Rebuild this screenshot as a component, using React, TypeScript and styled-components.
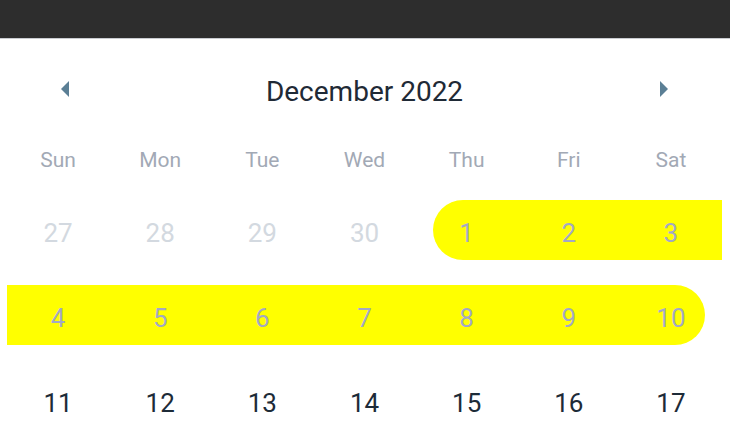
import React from "react";
import styled, { createGlobalStyle } from "styled-components";

const Global = createGlobalStyle`
  html, body { margin: 0; padding: 0; background: #ffffff; }
  body { font-family: Roboto, "Noto Sans", sans-serif; overflow: hidden; }
`;

const TopBar = styled.div`
  height: 38px;
  background: #2d2d2d;
  border-bottom: 1px solid #c9cbd0;
`;

const Calendar = styled.div`
  padding: 0 8px 0 7px;
`;

const Nav = styled.div`
  height: 104px;
  display: flex;
  align-items: center;
  justify-content: space-between;
  padding: 0 53px;
`;

const Arrow = styled.button`
  width: 10px;
  height: 16px;
  padding: 0;
  border: 0;
  background: none;
  display: flex;
  align-items: center;
  justify-content: center;
  color: #5b7f95;
  margin-top: -4px;
`;

const Title = styled.div`
  font-size: 28px;
  color: #1f2a36;
`;

const Weekdays = styled.div`
  height: 34px;
  display: grid;
  grid-template-columns: repeat(7, 1fr);
  align-items: center;
`;

const Weekday = styled.div`
  text-align: center;
  font-size: 21px;
  color: #a2a9b5;
`;

const Days = styled.div`
  margin-top: 23px;
  display: grid;
  grid-template-columns: repeat(7, 1fr);
  grid-auto-rows: 60px;
  row-gap: 25px;
`;

type Kind = "muted" | "range" | "normal";
type Edge = "none" | "start" | "end";

const Cell = styled.div`
  display: flex;
  align-items: stretch;
`;

const Fill = styled.div<{ $range: boolean; $edge: Edge }>`
  flex: 1;
  display: flex;
  align-items: center;
  justify-content: center;
  background: ${(p) => (p.$range ? "#ffff00" : "transparent")};
  margin-left: ${(p) => (p.$edge === "start" ? "calc(50% - 34px)" : "0")};
  margin-right: ${(p) => (p.$edge === "end" ? "calc(50% - 34px)" : "0")};
  border-radius: ${(p) =>
    p.$edge === "start" ? "30px 0 0 30px" : p.$edge === "end" ? "0 30px 30px 0" : "0"};
`;

const Num = styled.span<{ $kind: Kind; $edge: Edge }>`
  font-size: 26px;
  margin-top: 6px;
  padding-right: ${(p) => (p.$edge === "start" ? "17px" : "0")};
  padding-left: ${(p) => (p.$edge === "end" ? "17px" : "0")};
  color: ${(p) =>
    p.$kind === "muted" ? "#d3d9e0" : p.$kind === "range" ? "#a3a9c4" : "#1d2b38"};
`;

const weekdays = ["Sun", "Mon", "Tue", "Wed", "Thu", "Fri", "Sat"];

type Day = { n: number; kind: Kind; edge: Edge };

const days: Day[] = [
  { n: 27, kind: "muted", edge: "none" },
  { n: 28, kind: "muted", edge: "none" },
  { n: 29, kind: "muted", edge: "none" },
  { n: 30, kind: "muted", edge: "none" },
  { n: 1, kind: "range", edge: "start" },
  { n: 2, kind: "range", edge: "none" },
  { n: 3, kind: "range", edge: "none" },
  { n: 4, kind: "range", edge: "none" },
  { n: 5, kind: "range", edge: "none" },
  { n: 6, kind: "range", edge: "none" },
  { n: 7, kind: "range", edge: "none" },
  { n: 8, kind: "range", edge: "none" },
  { n: 9, kind: "range", edge: "none" },
  { n: 10, kind: "range", edge: "end" },
  ...[11, 12, 13, 14, 15, 16, 17].map((n) => ({ n, kind: "normal" as Kind, edge: "none" as Edge })),
];

const LeftIcon = () => (
  <svg width="10" height="16" viewBox="0 0 10 16">
    <polygon points="1,8 9,0 9,16" fill="currentColor" />
  </svg>
);
const RightIcon = () => (
  <svg width="10" height="16" viewBox="0 0 10 16">
    <polygon points="1,0 9,8 1,16" fill="currentColor" />
  </svg>
);

export default function App() {
  return (
    <>
      <Global />
      <TopBar />
      <Calendar>
        <Nav>
          <Arrow aria-label="Previous month">
            <LeftIcon />
          </Arrow>
          <Title>December 2022</Title>
          <Arrow aria-label="Next month">
            <RightIcon />
          </Arrow>
        </Nav>
        <Weekdays>
          {weekdays.map((w) => (
            <Weekday key={w}>{w}</Weekday>
          ))}
        </Weekdays>
        <Days>
          {days.map((d, i) => (
            <Cell key={i}>
              <Fill $range={d.kind === "range"} $edge={d.edge}>
                <Num $kind={d.kind} $edge={d.edge}>
                  {d.n}
                </Num>
              </Fill>
            </Cell>
          ))}
        </Days>
      </Calendar>
    </>
  );
}
